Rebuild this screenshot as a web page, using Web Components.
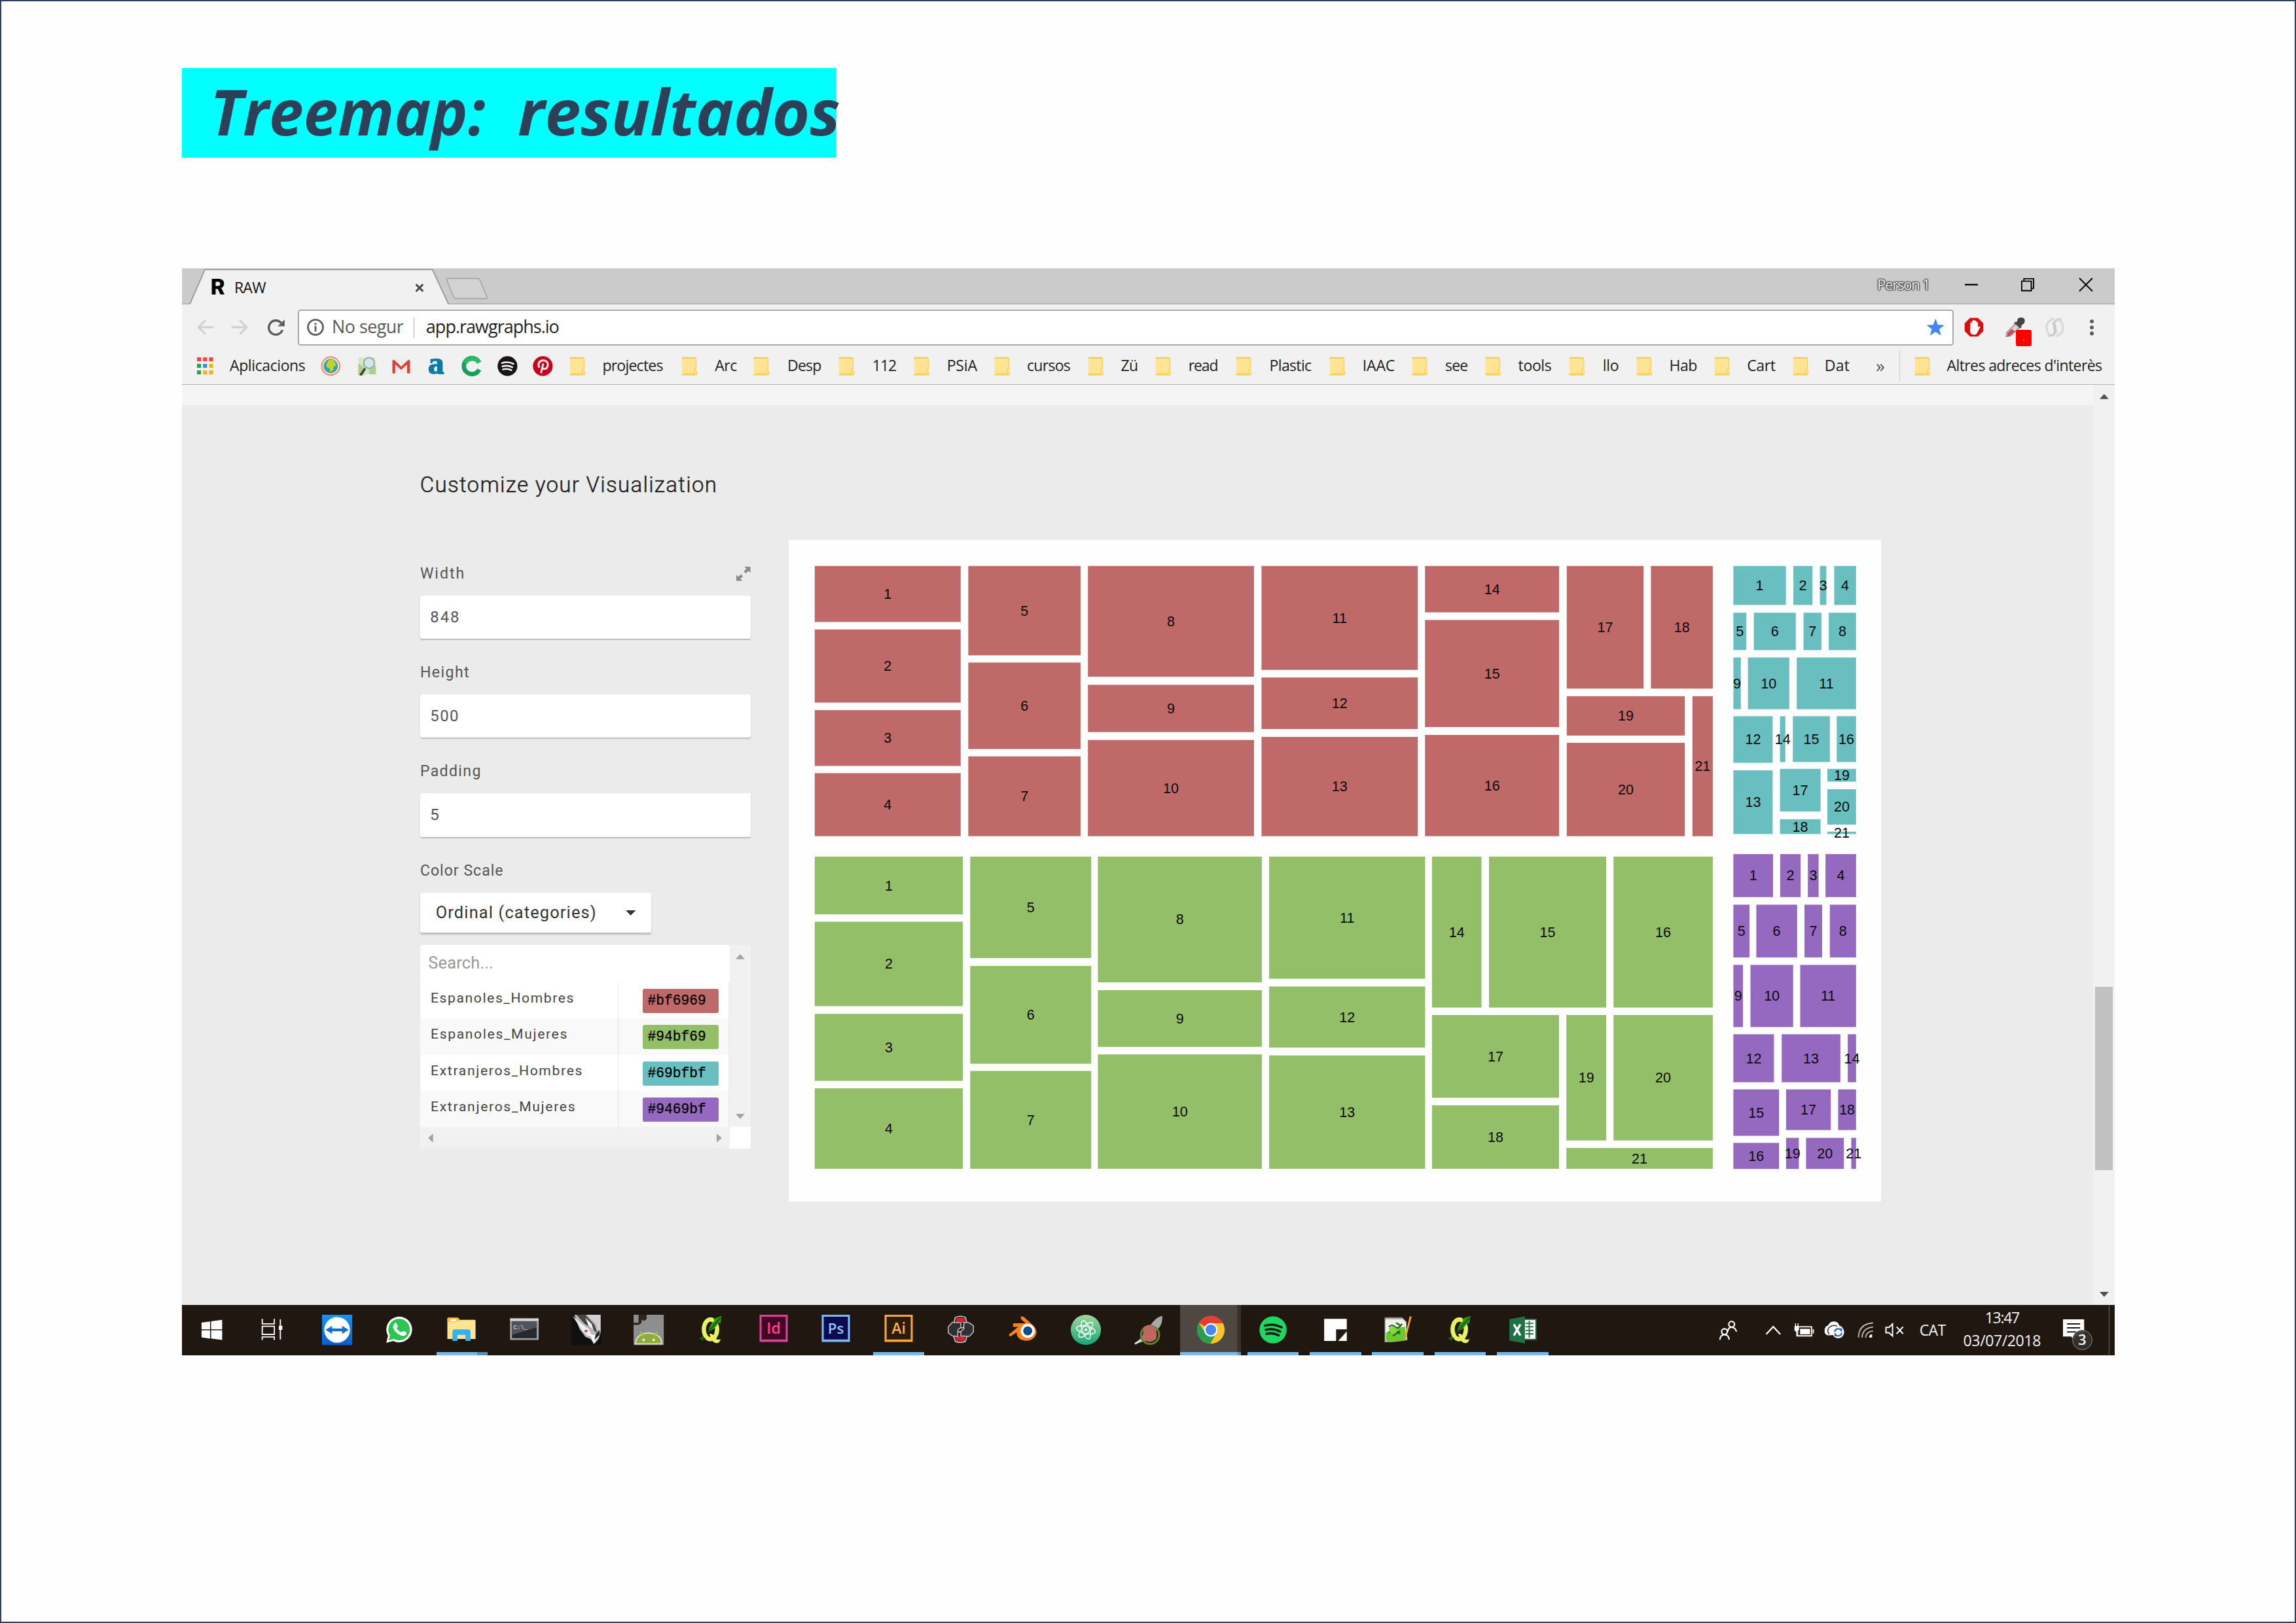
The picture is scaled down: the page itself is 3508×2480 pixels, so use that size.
<!DOCTYPE html>
<html lang="es">
<head>
<meta charset="utf-8">
<title>Treemap: resultados</title>
<style>
/* one rem is one pixel of the captured 1920x1080 desktop */
html{font-size:1.538px}
body{margin:0;background:#fefefe;width:3508px;height:2480px;overflow:hidden}
</style>
</head>
<body>
<slide-page></slide-page>
<script>
const SEG = '"Open Sans","Noto Sans",sans-serif';
const define = (name, css, html, after) => customElements.define(name, class extends HTMLElement {
  constructor() {
    super();
    this.attachShadow({ mode: 'open' });
  }
  connectedCallback() {
    const body = typeof html === 'function' ? html(this) : html;
    this.shadowRoot.innerHTML = `<style>*{box-sizing:border-box}:host{display:block;box-sizing:border-box}svg{display:block;overflow:visible}${css}</style>${body}`;
    if (after) after(this);
  }
});

/* a single line of text, spaced (or stretched) to a given width in px */
define('fit-text', ':host{flex:none}span{display:inline-block;white-space:pre;transform-origin:0 50%}', '<span><slot></slot></span>', el => {
  const s = el.shadowRoot.querySelector('span');
  const w = parseFloat(el.getAttribute('w')) * 1.538;
  el.style.width = w + 'px';
  const nat = s.getBoundingClientRect().width;
  const n = el.textContent.length;
  if (el.hasAttribute('stretch') || n < 2) s.style.transform = `scaleX(${w / nat})`;
  else s.style.letterSpacing = (w - nat) / n + 'px';
});

/* ---------- icons ---------- */
const I = {
  circle: ['0 0 20 20', `<circle cx="10" cy="10" r="9.6" fill="#f2845c"/><circle cx="10" cy="10" r="8.3" fill="#fbe9dc"/><circle cx="10" cy="10" r="7" fill="#27a6b5"/><path d="M8 4q4-1.500 6 1.500l1.500 4-2.500 1-.8 4-2.500 1.500-1-3.500-2.700-1.500-.5-3z" fill="#c5d22c"/>`],
  map: ['0 0 20 20', `<path d="M1 1h17v17H1z" fill="#d5e6c5"/><path d="M1 7l6 4v8H1zM12 12l7-3v9h-7z" fill="#a9d08f"/><path d="M8 12l-5 7" stroke="#3d3d30" stroke-width="2.2"/><circle cx="12" cy="6.5" r="5.5" fill="#cfe6ea" stroke="#93a9a3" stroke-width="1.4"/>`],
  gmail: ['0 0 20 20', `<path d="M1 3h18v14H1z" fill="#ececec"/><path d="M1 17V4l1.5-1L10 10l7.5-7L19 4v13h-3V8l-6 5.5L4 8v9z" fill="#dc4437"/>`],
  cee: ['0 0 20 20', `<path d="M17 6.5A8 8 0 1 0 17 13.500" fill="none" stroke="#14a05b" stroke-width="4.4"/><path d="M17 6.500A8 8 0 0 0 3 7" fill="none" stroke="#2abb67" stroke-width="4.400"/>`],
  spot: ['0 0 20 20', `<circle cx="10" cy="10" r="9.800" fill="#191414"/><path d="M4.500 7q6-2 11.500.8M5 10.300q5.200-1.500 9.800.8M5.500 13.300q4.500-1.200 8.300.7" fill="none" stroke="#f1f1f1" stroke-width="1.700" stroke-linecap="round"/>`],
  pin: ['0 0 20 20', `<circle cx="10" cy="10" r="9.800" fill="#c8021d"/><path d="M6.600 11.500C4.500 8 6.500 4.400 10.300 4.400c3.500 0 5.300 2.400 4.500 5.400-.7 3-3.800 4-5.100 2.100M10.400 7.500L8.200 17" fill="none" stroke="#f6e9ea" stroke-width="1.900"/>`],
  folder: ['0 0 16 20', `<path d="M0 1.500q0-1 1-1h13q1 0 1 1V12q1 1 1 3v4q0 .7-1 .7H1q-1 0-1-1z" fill="#ffe493"/><path d="M0 1.500q0-1 1-1h13q1 0 1 1v.6H0z" fill="#eccb6c"/><path d="M15 2v10M15 12.500q-2 .5-2 3v2.500H1.500L.5 19h14q1.200 0 1.200-1.500v-2" fill="none" stroke="#f5d160" stroke-width="1"/>`],
  apps: ['0 0 16 17', [0, 6.5, 13].map((y, j) => [0, 6, 12].map((x, i) => `<rect x="${x}" y="${y}" width="4" height="4" fill="${j == 0 ? '#fb4337' : i == 0 ? '#2da150' : i == 1 && j == 1 ? '#3a8af5' : '#fbb30b'}"/>`).join('')).join('')],
  windows: ['0 0 30 30', `<path d="M4.500 7.800l8.500-1.200v7.900H4.500zM14 6.500L25 5v9.500H14zM4.500 15.500H13v8.200l-8.500-1.300zM14 15.500h11V25l-11-1.400z" fill="#fff"/>`],
  task: ['0 0 30 30', `<path d="M5 4v5h12V4M5 11.500h12v8H5zM5 25v-3h12v3M23 4.500v20" fill="none" stroke="#fff" stroke-width="1.200"/><rect x="21.500" y="11" width="3.500" height="4" fill="#fff"/>`],
  tv: ['0 0 30 30', `<defs><linearGradient id="g" x2="0" y2="1"><stop stop-color="#1296f0"/><stop offset="1" stop-color="#0a5fca"/></linearGradient></defs><path d="M0 0h30v30H0z" fill="url(#g)"/><circle cx="15" cy="15" r="12.800" fill="#fff"/><path d="M3.500 15l6.500-4v2.600h10V11l6.500 4-6.500 4v-2.600H10V19z" fill="#0d6fd2"/>`],
  whats: ['0 0 30 30', `<path d="M2 28l1.800-7A12.800 12.800 0 1 1 9 26z" fill="#fff"/><path d="M4.500 25.500l1.300-5A10.700 10.700 0 1 1 9.500 24z" fill="#2bc64e"/><path d="M10 9q1.500-2 2.500 0l1 2.300q0 1-1.200 2 2 3.200 5 4.300l1.700-1.600 3 1.600q.8.500-.2 2-2 2-5 1Q10.500 18 8.800 12.500 8.800 10.500 10 9z" fill="#fff"/>`],
  explorer: ['0 0 30 30', `<path d="M1 4q0-1 1-1h9q1 0 1.500 1l.5 1h15q1 0 1 1v18H1z" fill="#ffe591"/><path d="M1 4q0-1 1-1h9q1 0 1.500 1l.6 1.500L10 7H1z" fill="#fdbd2b"/><rect x="4" y="4.500" width="6" height="2" fill="#fff"/><path d="M6 26V17q0-2.500 2.500-2.500h13q2.500 0 2.500 2.500v9h-5v-6h-8v6z" fill="#38b0ea"/>`],
  cmd: ['0 0 30 30', `<rect x=".8" y="4" width="28.500" height="21" rx="1" fill="#9b9ea3"/><rect x=".8" y="3.500" width="28.500" height="2.500" fill="#d4d6d9"/><rect x="2.800" y="6.500" width="24.500" height="16.800" fill="#25282c"/><path d="M2.800 6.500h24.500v6L2.800 20z" fill="#50535a"/><text x="4" y="14" font-size="6" font-family="Liberation Mono,monospace" fill="#e5e5e5">C:\\_</text>`],
  rhino: ['0 0 30 30', `<path d="M0 0h30v30H0z" fill="#101010"/><path d="M3 0h26v18l-2 6-4 5-4-5-5-2-6-8z" fill="#b9b9b9"/><path d="M1 1l9 8 7 5 4 8-5-1-5-5z" fill="#efefef"/><path d="M15 0l10 9 2 9 2-2V0z" fill="#d2d2d2"/><path d="M5 0h9l9 10 3 9-5-5-8-5z" fill="#454545"/><path d="M14 3l6 6 2 6-5-4z" fill="#f5f5f5"/><path d="M19 20l3 9 3-5 3-3-3-1z" fill="#fff"/><path d="M28 15l-4 5-1 5 5-5z" fill="#222"/><circle cx="14.500" cy="16.200" r="1.400" fill="#e13535"/>`],
  android: ['0 0 30 30', `<path d="M0 0h30v30H0z" fill="#8e8e90"/><path d="M5 0h8v4l-2 2-3-1v3l-3 2H0V8h5z" fill="#2d241c"/><path d="M2 29q0-10 13-11 13 1 13 11z" fill="#8eae3b" stroke="#e9efd9" stroke-width="1"/><path d="M7 17l2 4M23 17l-2 4" stroke="#9fc04c" stroke-width="1.800"/><circle cx="10" cy="25" r="1.200" fill="#fff"/><circle cx="20" cy="25" r="1.200" fill="#fff"/>`],
  qgis: ['0 0 30 30', `<ellipse cx="14" cy="14.500" rx="6.600" ry="9.800" fill="none" stroke="#e6f25e" stroke-width="4.200"/><path d="M13 19q3-1 5 3t6 2q-1 5-5 4t-6-9z" fill="#e6f25e"/><path d="M12 17q1-8 6-11l-1-2 8-3-1 8-2-1q-3 6-10 9z" fill="#2c9411"/><path d="M11.500 17.500L24 3" stroke="#0c5a06" stroke-width="1.200"/><path d="M3 23.500h6M6 21v5" stroke="#166d12" stroke-width="1.200"/>`],
  id: ['0 0 30 30', `<path d="M1 0h28v27H1z" fill="#e0409b"/><path d="M3 2h24v22.500H3z" fill="#420822"/><text x="15" y="19" font-size="15" text-anchor="middle" font-weight="600" font-family="Open Sans,sans-serif" fill="#ff3fa2">Id</text>`],
  ps: ['0 0 30 30', `<path d="M1 0h28v27H1z" fill="#7db9f5"/><path d="M3 2h24v22.500H3z" fill="#0c0a4f"/><text x="15" y="19" font-size="14.500" text-anchor="middle" font-weight="600" font-family="Open Sans,sans-serif" fill="#8ec7fb">Ps</text>`],
  ai: ['0 0 30 30', `<path d="M1 0h28v27H1z" fill="#fba634"/><path d="M3 2h24v22.500H3z" fill="#2c1a0a"/><text x="15" y="19" font-size="15" text-anchor="middle" font-weight="600" font-family="Open Sans,sans-serif" fill="#fdb14c">Ai</text>`],
  knot: ['0 0 30 30', `<path d="M9.500 2.500q5-2 10 0l1.500 5.500-4 5h-5l-4-5zM9.500 26.500q5 2 10 0L21 22l-4-5h-5l-4 5z" fill="#222" stroke="#d5d5d5" stroke-width="1"/><path d="M10 3.500q5-1.500 9 0v4.300h-9zM10 21.500h9v4q-4 1.500-9 0z" fill="#d9202c"/><path d="M2.500 12l4-4.500 8.500.500v4.500L12 15v6.500l-5.500-.5-4-3z" fill="#303030" stroke="#bdbdbd" stroke-width="1"/><path d="M27.500 17l-4 4.500-8.500-.500v-4.500L18 14V7.500l5.500.5 4 3z" fill="#303030" stroke="#bdbdbd" stroke-width="1"/>`],
  blender: ['0 0 30 30', `<path d="M12 2q2-1 4 1l9 8q5 6 1 11t-11 3.500-7-8l-6 4q-2 0-1.500-2l9-7.500H5q-1.500-1.500 0-3.500h12l-4.500-4z" fill="#f78320"/><circle cx="19" cy="16" r="7" fill="#fff"/><circle cx="19" cy="16" r="4.500" fill="#0f4c8e"/>`],
  atom: ['0 0 30 30', `<defs><linearGradient id="g" x2="0" y2="1"><stop stop-color="#9ed89a"/><stop offset="1" stop-color="#15a878"/></linearGradient></defs><circle cx="15" cy="15" r="15" fill="url(#g)"/><g fill="none" stroke="#fff" stroke-width="1"><ellipse cx="15" cy="15" rx="3.700" ry="9.500" transform="rotate(-18 15 15)"/><ellipse cx="15" cy="15" rx="3.700" ry="9.500" transform="rotate(42 15 15)"/><ellipse cx="15" cy="15" rx="3.700" ry="9.500" transform="rotate(102 15 15)"/></g><circle cx="15" cy="15" r="1.300" fill="#fff"/>`],
  feather: ['0 0 30 30', `<path d="M29 1q1 9-5 14L12 26l-9 3 4-5 10-13q5-8 12-10z" fill="#a9aaa6"/><circle cx="17" cy="20" r="9" fill="none" stroke="#60862a" stroke-width="2"/><path d="M11 12q6-4 10 0 4 6 2 12-3 3-7 3-6-1-6.500-5z" fill="#bf6663"/><path d="M2 29l6-4" stroke="#ddd" stroke-width="2"/>`],
  chrome: ['0 0 30 30', `<circle cx="15" cy="15" r="13.700" fill="#fbc42f"/><path d="M15 15L3.100 8.200A13.700 13.700 0 0 1 27 8.500H15z" fill="#e33e32"/><path d="M3.100 8.200A13.700 13.700 0 0 0 14.500 28.700L20.500 18 15 15 9.500 18z" fill="#27a050"/><circle cx="15" cy="15" r="6.800" fill="#fff"/><circle cx="15" cy="15" r="5.300" fill="#4687f3"/>`],
  spotify: ['0 0 30 30', `<circle cx="15" cy="15" r="13.500" fill="#1ed760"/><path d="M7 10.800q8.500-2.500 16.500 1.700M7.800 15q7.500-2 14.200 1.700M8.500 19q6.500-1.600 12 1.500" fill="none" stroke="#191c18" stroke-width="2.300" stroke-linecap="round"/>`],
  sticky: ['0 0 30 30', `<path d="M4 4h22.500v10.500H16V26H4z" fill="#fff"/><path d="M26.500 15v2L18 26h-2V15z" fill="#231a12"/><path d="M26.500 16.500V26H18z" fill="#fff"/>`],
  npp: ['0 0 30 30', `<path d="M2 3h17l4 4 1 18q-12 2-22 2z" fill="#f0f0ee" stroke="#999" stroke-width=".7"/><path d="M3 18q8-6 19-6l1 13q-10 2-20 1.500z" fill="#69c92e"/><path d="M6 12q3-3 6 0t7-3M6 18q5-4 11 1M10 21l7-5M13 8l5 3" fill="none" stroke="#2a5a1a" stroke-width="1.500"/><path d="M6 13q5-3 9 2l-3 4-5-1z" fill="#7edc3a"/><path d="M2.500 3.500h17" stroke="#777" stroke-width="2" stroke-dasharray="1 1"/><path d="M28.500 2l-5.500 21-1.200 2.500-.1-3.500L26.500 1.500z" fill="#f0a42f"/>`],
  excel: ['0 0 30 30', `<path d="M15 4.500h13.500v20H15z" fill="#fff" stroke="#1f7244" stroke-width="1.300"/><path d="M18 8.500h8M18 12h8M18 15.500h8M18 19h8M21.800 6v17" stroke="#1f7244" stroke-width="1.200"/><path d="M2 4.500L17.500 1.500v27L2 25.500z" fill="#1f7244"/><path d="M6.500 9.500l6.500 11M13 9.500l-6.500 11" stroke="#fff" stroke-width="2.200"/>`],
  people: ['0 0 20 20', `<g fill="none" stroke="#fff" stroke-width="1.500"><circle cx="13.500" cy="3.800" r="3"/><path d="M9.500 11.500q0-4.500 4-4.500t5 4.500"/><circle cx="6" cy="11.500" r="3"/><path d="M1.200 20q.3-5.300 4.800-5.300t5 5.300"/></g>`],
  chev: ['0 0 16 10', `<path d="M1 9l7-7.500L15 9" fill="none" stroke="#fff" stroke-width="1.500"/>`],
  battery: ['0 0 20 14', `<path d="M5 3.500h12.500v9H3.500V8M19.200 6v4" fill="none" stroke="#fff" stroke-width="1.200"/><path d="M6 5.500h10v5.500H6z" fill="#fff"/><path d="M1 3h3.500v3.500L3 8H2L.8 6.500zM1.500 0v3M4 0v3M2.700 8v5" fill="#fff" stroke="#fff" stroke-width=".9"/>`],
  cloud: ['0 0 20 17', `<path d="M4 14q-4-1-3.500-5Q.5 5 4 4q2-4 6-3.800 4.500.3 5 4Q19 5 19 9v4z" fill="#fff"/><path d="M5 13Q2 8 6 5.500 9 3 13 5" fill="none" stroke="#3d342c" stroke-width="1"/><circle cx="14" cy="11" r="5.900" fill="#fff"/><path d="M10.500 10.500a3.600 3.600 0 0 1 6.500-1.500V7M17.500 11.500a3.600 3.600 0 0 1-6.500 1.500v2" fill="none" stroke="#1668d6" stroke-width="1.400"/>`],
  wifi: ['0 0 16 16', `<g fill="none" stroke="#bbb" stroke-width="1.200"><path d="M1 15.500Q1 2 15.500 1"/><path d="M4.500 15.500Q5 6 15.500 5"/><path d="M8 15.500Q8.500 9.500 15.500 9"/></g><path d="M11.500 15.500q0-3 3-3.300v3.300z" fill="#fff"/>`],
  vol: ['0 0 19 14', `<path d="M1 4h3l3.500-3.300v12L4 9.500H1zM11.500 3.500l6.500 7M18 3.500l-6.500 7" fill="none" stroke="#fff" stroke-width="1.300"/>`],
  note: ['0 0 21 21', `<path d="M0 0h21v17h-9v4l-4-4H0z" fill="#fff"/><path d="M4 4.500h13M4 8.500h13M4 12.500h9" stroke="#20170f" stroke-width="1.300"/>`],
  back: ['0 0 17 17', `<path d="M16.500 8.500H2M8.500 1.500l-7 7 7 7" fill="none" stroke="#cfcfcf" stroke-width="1.900"/>`],
  fwd: ['0 0 17 17', `<path d="M.5 8.500H15M8.500 1.500l7 7-7 7" fill="none" stroke="#cfcfcf" stroke-width="1.900"/>`],
  reload: ['0 0 18 18', `<path d="M15.300 11.200A7 7 0 1 1 14 4.200" fill="none" stroke="#5a5a5a" stroke-width="2.200"/><path d="M17.500.8V7.500H10.600z" fill="#5a5a5a"/>`],
  info: ['0 0 17 17', `<circle cx="8.500" cy="8.500" r="7.500" fill="none" stroke="#5a5a5a" stroke-width="1.700"/><path d="M8.500 7.300v5.400M8.500 4.200v1.900" stroke="#5a5a5a" stroke-width="1.800"/>`],
  star: ['0 0 20 19', `<path d="M10 0l2.500 6.700 7.200.3-5.700 4.400 2 7L10 14.300 4 18.400l2-7L.3 7l7.200-.3z" fill="#4285f4"/>`],
  adb: ['0 0 20 20', `<path d="M6 .5h8l5.500 5.500v8L14 19.500H6L.5 14V6z" fill="#d90f0f"/><path d="M6.300 9V5.500h1.500V3.400h1.600V2.600H11v1h1.600V5h1.500v5l1.500-1q1 .3.500 1.200l-3 6q-1 1.500-3 1.500-4 0-4-4z" fill="#fff"/>`],
  drop: ['0 0 20 20', `<path d="M13 1q4-2 6 0t0 5l-3 2.500 1 1-2 1.500-6-5 2-2 1 .7z" fill="#444"/><path d="M10.500 6.500l4 3.500-9 8.500-4 .5.500-4z" fill="#d8d8d8" stroke="#777" stroke-width=".8"/><path d="M7 11.500l3 2.500-5 4-2.500.5.500-3z" fill="#d9434a"/>`],
  swirl: ['0 0 20 20', `<g fill="none" stroke-linecap="round"><path d="M16 2q-7-1-6.500 7Q9.500 13 11.500 14" stroke="#d2d2d2" stroke-width="2.400"/><path d="M4 18q7 1 6.500-7Q10.500 7 8.500 6" stroke="#c6c6c6" stroke-width="2"/><path d="M8.500 1.500Q1 4 2 11q.5 4 3 6M11.500 18.500Q19 16 18 9q-.5-4-3-6" stroke="#dadada" stroke-width="2.200"/></g>`],
  dots: ['0 0 4 16', `<g fill="#5a5a5a"><circle cx="2" cy="2" r="1.900"/><circle cx="2" cy="8" r="1.900"/><circle cx="2" cy="14" r="1.900"/></g>`],
  expand: ['0 0 14 14', `<path d="M8 0h6v6l-2-2-2.600 2.600-2-2L10 2zM0 8l2 2 2.600-2.600 2 2L4 12l2 2H0z" fill="#8a8a8a"/>`],
  min: ['0 0 13 13', `<path d="M0 6.500h13" stroke="#000" stroke-width="1.500"/>`],
  restore: ['0 0 13 13', `<path d="M.6 3h9.500v9.500H.6zM2.800 3V.6h9.600v9.600H10" fill="none" stroke="#000" stroke-width="1.200"/>`],
  close: ['0 0 13 13', `<path d="M0 0l13 13M13 0L0 13" stroke="#000" stroke-width="1.200"/>`],
  tabx: ['0 0 9 9', `<path d="M1 1l7 7M8 1L1 8" stroke="#444" stroke-width="1.900"/>`]
};
define('app-icon', ':host{flex:none}svg{width:100%;height:100%}', el => {
  const [vb, body] = I[el.getAttribute('name')];
  el.style.width = el.getAttribute('w') + 'rem';
  el.style.height = (el.getAttribute('h') || el.getAttribute('w')) + 'rem';
  return `<svg viewBox="${vb}">${body}</svg>`;
});
const ic = (name, w, h, style = '') => `<app-icon name="${name}" w="${w}" h="${h || w}" style="${style}"></app-icon>`;
const ft = (text, w, style = '') => `<fit-text w="${w}" style="${style}">${text}</fit-text>`;
const gap = w => `<i style="flex:none;width:${w}rem"></i>`;

/* ---------- browser chrome ---------- */
define('tab-strip', `:host{height:36rem;background:#cbcbcb;font:15rem/20rem ${SEG};color:#111}
.r{display:flex;height:36rem;border-bottom:1rem solid #999}
.tab{position:relative;width:257rem;height:36rem;margin-left:7.500rem}
.tab>svg{position:absolute;inset:0;width:257rem;height:36rem}
.in{position:relative;display:flex;align-items:center;height:34rem;padding:4.500rem 0 0 21rem}
b{width:13rem;font:900 22rem/20rem Roboto,sans-serif;color:#000}
.nt{width:42rem;height:22rem;margin:9rem 0 0 -2.500rem}
.ctl{display:flex;margin-left:auto;padding-top:10rem;height:34rem}
.p{color:#fafafa;text-shadow:0 0 1px #222,0 0 1px #222,0 0 1.500px #222,0 0 2px #333,0 0 2px #333,0 0 3px #444;margin-top:-3.500rem}`,
`<div class="r"><div class="tab"><svg viewBox="0 0 257 36"><path d="M0 35.500L15 1.500H241L257 35.500V37H0z" fill="#f1f1f1"/><path d="M0 35.500L15 1.200H241L257 35.500" fill="none" stroke="#999" stroke-width="1.200"/></svg>
<div class="in"><b>R</b>${gap(10.5)}${ft('RAW', 31)}${gap(148.5)}${ic('tabx', 9)}</div></div>
<svg class="nt" viewBox="0 0 42 22"><path d="M1.500 1H32q1.500 0 2 1.500l7 17q.5 1.500-1 1.500H10q-1.500 0-2-1.500l-7-17Q.5 1 1.500 1z" fill="#d3d3d3" stroke="#aaa" stroke-width="1.200"/></svg>
<div class="ctl">${ft('Person 1', 52, 'font-size:14.5rem').replace('<fit-text', '<fit-text class="p"')}${gap(35)}${ic('min', 13)}${gap(43)}${ic('restore', 13)}${gap(45)}${ic('close', 13)}${gap(22)}</div></div>`);

define('tool-bar', `:host{height:44rem;background:#f1f1f1;display:flex;align-items:center;padding:1.500rem 0 0 15rem;font:17.500rem/34rem ${SEG}}
.box{display:flex;align-items:center;height:35.500rem;width:1645rem;margin:0 0 0 12.700rem;background:#fff;border:1.500rem solid #a9a9a9;border-radius:3rem;padding-left:8rem}
.d{width:1rem;height:20rem;background:#aaa;margin:0 11.500rem 0 10rem}
.dr{position:relative;width:20rem;height:20rem}
.bd{position:absolute;left:11.500rem;top:12.500rem;width:15rem;height:16rem;border-radius:2rem;background:#f00;color:#fcc;font:9rem/14rem ${SEG};text-align:center}`,
`${ic('back', 17)}${gap(17)}${ic('fwd', 17)}${gap(18.5)}${ic('reload', 18)}
<div class="box">${ic('info', 17)}${gap(7.5)}${ft('No segur', 71, 'color:#5a5a5a;margin-top:-1.5rem')}<div class="d"></div>${ft('app.rawgraphs.io', 132, 'color:#222;margin-top:-1.5rem')}${gap(1358.5)}${ic('star', 18.5)}</div>
${gap(10)}${ic('adb', 19.5)}${gap(21)}<div class="dr">${ic('drop', 20)}<span class="bd">.</span></div>${gap(19.5)}${ic('swirl', 20)}${gap(25.5)}${ic('dots', 4, 16)}`);

/* [left edge of the folder, left edge of the label, label width, label] */
const marks = [[385,417.8,60,'projectes'],[496,529.5,22,'Arc'],[568,601.6,33.5,'Desp'],[652,686,23.5,'112'],[727,760,30,'PSiA'],[806.7,839.5,43,'cursos'],[900,932.8,17,'Zü'],[966.8,1000,29,'read'],[1046.8,1080.5,41.5,'Plastic'],[1139.7,1173,32,'IAAC'],[1221.8,1255,22.5,'see'],[1295,1327.6,33,'tools'],[1378,1411.5,16,'llo'],[1444.9,1477.8,27.5,'Hab'],[1522,1555,28,'Cart'],[1600,1632,25,'Dat']];
define('bookmark-bar', `:host{height:36rem;background:#f1f1f1;border-bottom:1rem solid #b4b4b4;font:15rem/20rem ${SEG};color:#222}
.r{display:flex;align-items:center;height:34.500rem}
fit-text{margin-top:-2rem}
.a{display:flex;justify-content:center;width:20rem;font:bold 32rem/20rem "Liberation Serif",serif;color:#0b7ba8;-webkit-text-stroke:1rem #0b7ba8;margin-top:-5rem}
.m{display:flex;align-items:center}`,
`<div class="r">${gap(15)}${ic('apps', 16, 17)}${gap(16.5)}${ft('Aplicacions', 75)}${gap(15.5)}${ic('circle', 20)}${gap(16)}${ic('map', 19.5)}${gap(14.5)}${ic('gmail', 19.5)}${gap(15)}<span class="a">a</span>${gap(16)}${ic('cee', 20)}${gap(15)}${ic('spot', 20)}${gap(15)}${ic('pin', 20)}${gap(16.5)}
${marks.map((m, i) => `<div class="m" style="width:${((marks[i + 1] || [1683])[0] - m[0]).toFixed(1)}rem">${ic('folder', 16, 19)}${gap((m[1] - m[0] - 16).toFixed(1))}${ft(m[3], m[2])}</div>`).join('')}
${ft('»', 9, 'font-size:18rem;color:#555')}${gap(14)}<i style="width:1rem;height:31rem;background:#ccc"></i>${gap(14)}${ic('folder', 16, 19)}${gap(16.5)}${ft("Altres adreces d'interès", 154)}</div>`);

/* ---------- RAW page ---------- */
define('form-field', `:host{margin-bottom:24rem}
.l{display:flex;justify-content:space-between;align-items:center;height:20rem;margin-bottom:11.400rem;font:15rem/21rem Roboto,sans-serif;color:#555}
.i{height:43rem;background:#fff;border-radius:2rem;box-shadow:0 1rem 1rem #bbb;font:15.500rem/43rem Roboto,sans-serif;color:#555;padding-left:10rem}`,
el => `<div class="l">${ft(el.getAttribute('label'), el.getAttribute('lw'))}${el.hasAttribute('expand') ? ic('expand', 14) : ''}</div><div class="i">${ft(el.getAttribute('value'), el.getAttribute('vw'))}</div>`);

const rows = [['Espanoles_Hombres', 143, '#bf6969'], ['Espanoles_Mujeres', 136.5, '#94bf69'], ['Extranjeros_Hombres', 151.5, '#69bfbf'], ['Extranjeros_Mujeres', 144.5, '#9469bf']];
define('color-list', `:host{display:grid;grid-template-columns:307.400rem 21rem;grid-template-rows:180.800rem 21rem;width:328.400rem}
.s{height:36.800rem;background:#fff;border-radius:2rem;font:16.500rem/36rem Roboto,sans-serif;color:#999;padding-left:8rem}
.row{display:flex;height:36rem;width:306.200rem;background:#fff;font:13.700rem/20rem Roboto,sans-serif;color:#444}
.row:nth-child(odd){background:#f9f9f9}
.n{width:197rem;padding:5.800rem 0 0 10.500rem;border-right:1rem solid #e4e4e4}
.c{width:75.500rem;height:24rem;margin:6.500rem 0 0 24rem;border-radius:2rem;padding-left:5rem;font:13.800rem/23.500rem "Liberation Mono",monospace;color:#000;-webkit-text-stroke:.2rem #000}
.v{display:flex;flex-direction:column;justify-content:space-between;align-items:center;background:#f1f1f1;padding:9rem 0 8.500rem}
.h{display:flex;justify-content:space-between;align-items:center;background:#f1f1f1;padding:0 8rem}
.k{background:#fff}`,
`<div><div class="s">${ft('Search...', 65)}</div>${rows.map(r => `<div class="row"><div class="n">${ft(r[0], r[1])}</div><div class="c" style="background:${r[2]}">${ft(r[2], 58)}</div></div>`).join('')}</div>
<div class="v"><svg style="width:9rem;height:5rem" viewBox="0 0 9 5"><path d="M0 5L4.500 0 9 5z" fill="#a3a3a3"/></svg><svg style="width:9rem;height:5rem" viewBox="0 0 9 5"><path d="M0 0l4.500 5L9 0z" fill="#a3a3a3"/></svg></div>
<div class="h"><svg style="width:5rem;height:9rem" viewBox="0 0 5 9"><path d="M5 0L0 4.500 5 9z" fill="#a3a3a3"/></svg><svg style="width:5rem;height:9rem" viewBox="0 0 5 9"><path d="M0 0l5 4.500L0 9z" fill="#a3a3a3"/></svg></div><div class="k"></div>`);

/* treemap leaves: x1, x2, y1, y2 in order of their labels */
const B = 1277.3, T = 864.4, GT = 1308.5, GB = 1785.6, L = 2648.2, R = 2835.6;
const groups = {
  '#bf6969': [[1244.6,1467.6,T,950],[1244.6,1467.6,961.4,1073.2],[1244.6,1467.6,1084.7,1170],[1244.6,1467.6,1181,B],[1479.2,1650.7,T,1001],[1479.2,1650.7,1012,1144.2],[1479.2,1650.7,1155.3,B],[1662,1915.7,T,1033.7],[1662,1915.7,1046,1118.3],[1662,1915.7,1130.3,B],[1927.2,2166,T,1023.2],[1927.2,2166,1034.8,1113.6],[1927.2,2166,1125.6,B],[2177,2382,T,935.3],[2177,2382,947,1110.6],[2177,2382,1122.6,B],[2393.6,2511,T,1051.8],[2522.2,2616.7,T,1051.8],[2393.6,2574,1063.4,1123.5],[2393.6,2574,1134.7,B],[2585.6,2616.7,1063.4,B]],
  '#94bf69': [[1244.6,1471,GT,1396.8],[1244.6,1471,1408,1537],[1244.6,1471,1548.9,1651.2],[1244.6,1471,1662.6,GB],[1482.2,1667,GT,1463.6],[1482.2,1667,1475.6,1625],[1482.2,1667,1636,GB],[1677.2,1927.8,GT,1500.6],[1677.2,1927.8,1512.6,1599.3],[1677.2,1927.8,1610.8,GB],[1938.9,2177.2,GT,1495.2],[1938.9,2177.2,1507,1600.3],[1938.9,2177.2,1612.3,GB],[2187.7,2263.3,GT,1539.2],[2274.8,2453.9,GT,1539.2],[2465,2616.7,GT,1539.2],[2187.7,2381.8,1550.6,1677],[2187.7,2381.8,1688.6,GB],[2393,2453.9,1550.6,1742.3],[2465,2616.7,1550.6,1742.3],[2393,2616.7,1753.7,GB]],
  '#69bfbf': [[L,2728.4,T,924],[2739.8,2769,T,924],[2780.4,2790.2,T,924],[2802.2,R,T,924],[L,2668,935.8,993],[2679.4,2743.6,935.8,993],[2755.4,2782.7,935.8,993],[2793.9,R,935.8,993],[L,2659.6,1004.2,1083.3],[2670.4,2733.6,1004.2,1083.3],[2745,R,1004.2,1083.3],[L,2708.2,1094,1165.2],[L,2708.2,1176.7,1274],[2719.3,2727.6,1094,1164],[2739,2795.6,1094,1164],[2806.1,R,1094,1164],[2719.3,2781.4,1174.4,1239.6],[2719.3,2781.4,1251.4,1274],[2791.8,R,1174.4,1194],[2791.8,R,1205.6,1259.6],[2791.8,R,1270.4,1274]],
  '#9469bf': [[L,2708.8,1304.7,1370.4],[2719.7,2750.9,1304.7,1370.4],[2762,2778.4,1304.7,1370.4],[2789,R,1304.7,1370.4],[L,2672.8,1382,1462.6],[2683.2,2745.6,1382,1462.6],[2756.8,2783.8,1382,1462.6],[2795.6,R,1382,1462.6],[L,2662.8,1474,1569],[2674.3,2739.5,1474,1569],[2750.3,R,1474,1569],[L,2710.2,1580,1653.3],[2722,2811.7,1580,1653.3],[2822.9,R,1580,1653.3],[L,2718,1664.2,1735.2],[L,2718,1746,1785.8],[2728.7,2797,1664.2,1726.3],[2808.2,R,1664.2,1726.3],[2728.7,2748.2,1738.3,1785.8],[2759.2,2817,1738.3,1785.8],[2828.3,R,1738.3,1785.8]]
};
define('tree-map', ':host{width:1669px;height:1011px;background:#fefefe;flex:none}svg{width:1669px;height:1011px}text{font:21.500px "Liberation Sans",Arial,sans-serif;text-anchor:middle;fill:#0a0a0a}',
() => `<svg viewBox="1204.800 824.600 1669 1011">${Object.entries(groups).map(([c, list]) => `<g>${list.map(([x, X, y, Y]) => `<rect x="${x}" y="${y}" width="${(X - x).toFixed(1)}" height="${(Y - y).toFixed(1)}" fill="${c}"/>`).join('')}${list.map(([x, X, y, Y], i) => `<text x="${(x + X) / 2}" y="${(y + Y) / 2 + 7.5}">${i + 1}</text>`).join('')}</g>`).join('')}</svg>`);

define('raw-page', `:host{display:flex;height:914rem;background:#ebebeb}
.pg{width:1898.600rem}
.top{height:19.600rem;background:#f5f5f5}
.hd{padding:64.600rem 0 0 236.500rem;font:300 21.500rem/30rem Roboto,sans-serif;color:#222;-webkit-text-stroke:.3rem #222}
.row{display:flex;margin:39.400rem 0 0 236.600rem;align-items:flex-start}
.l{width:328.400rem;margin-right:37.700rem;padding-top:24rem;flex:none}
.lb{height:20rem;font:15rem/21rem Roboto,sans-serif;color:#555}
.sel{display:flex;align-items:center;justify-content:space-between;width:229.500rem;height:40rem;margin:11.400rem 0 12.400rem;background:#fff;border-radius:2rem;box-shadow:0 1.500rem 1.500rem #bbb;font:16.500rem/40rem Roboto,sans-serif;color:#333;padding:0 15rem 0 15.500rem}
.sb{display:flex;flex-direction:column;align-items:center;flex:1;background:#f1f1f1;padding-top:9rem}
.th{width:17rem;height:182rem;background:#c1c1c1;margin:584rem 0 121rem}`,
`<div class="pg"><div class="top"></div><div class="hd">${ft('Customize your Visualization', 295.5)}</div>
<div class="row"><div class="l"><form-field label="Width" lw="45" value="848" vw="30" expand></form-field><form-field label="Height" lw="49.5" value="500" vw="29"></form-field><form-field label="Padding" lw="61" value="5" vw="9"></form-field>
<div class="lb">${ft('Color Scale', 83)}</div><div class="sel">${ft('Ordinal (categories)', 160)}<svg style="width:10rem;height:5rem" viewBox="0 0 10 5"><path d="M0 0h10L5 5z" fill="#333"/></svg></div><color-list></color-list></div>
<tree-map></tree-map></div></div>
<div class="sb"><svg style="width:9rem;height:5rem" viewBox="0 0 9 5"><path d="M0 5L4.500 0 9 5z" fill="#505050"/></svg><div class="th"></div><svg style="width:9rem;height:5rem" viewBox="0 0 9 5"><path d="M0 0l4.500 5L9 0z" fill="#505050"/></svg></div>`);

/* ---------- taskbar ---------- */
define('task-item', `:host{position:relative;width:62rem;height:50rem;display:flex;align-items:center;justify-content:center;flex:none}
u{position:absolute;bottom:0;left:5.500rem;width:51rem;height:3rem;background:#76b9ed}
:host([active]){background:linear-gradient(90deg,#201710 0.500rem,#4f4741 0.500rem,#4f4741 57.500rem,#3a332d 57.500rem,#3a332d 61rem,#201710 61rem)}
:host([active]) u{left:.5rem;width:60.500rem;background:linear-gradient(90deg,#76b9ed 57rem,#5b93bd 57rem)}
:host([multi]) u{left:6rem;background:linear-gradient(90deg,#76b9ed 40rem,#5b8fb5 40rem)}`,
el => `${ic(el.getAttribute('icon'), el.getAttribute('size') || 30)}${el.hasAttribute('open') ? '<u></u>' : ''}`);
const items = ['tv', 'whats', 'explorer|open multi', 'cmd', 'rhino', 'android', 'qgis', 'id', 'ps', 'ai|open', 'knot', 'blender', 'atom', 'feather', 'chrome|open active', 'spotify|open', 'sticky|open', 'npp|open', 'qgis|open', 'excel|open'];
define('task-bar', `:host{display:flex;align-items:center;height:50rem;background:#201710;color:#f4f4f4;font:15rem/20rem ${SEG}}
.tray{display:flex;align-items:center;margin-left:auto;height:50rem}
.clk{display:flex;flex-direction:column;align-items:center;width:77rem;padding-top:1rem}
.clk fit-text{height:23rem;line-height:20rem}
.nt{position:relative;width:21rem;height:21rem}
.bd{position:absolute;left:9rem;top:10rem;width:20.500rem;height:20.500rem;border-radius:50%;border:1rem solid #888;background:#333230ee;color:#fff;font:600 14rem/18rem ${SEG};text-align:center}`,
`${gap(15)}${ic('windows', 30)}${gap(30)}${ic('task', 30)}${gap(18)}${items.map(s => { const [n, f] = s.split('|'); return `<task-item icon="${n}" ${f || ''}></task-item>`; }).join('')}
<div class="tray">${ic('people', 19, 19)}${gap(27)}${ic('chev', 16, 10)}${gap(12.500)}${ic('battery', 20, 14)}${gap(10.5)}${ic('cloud', 20, 17)}${gap(13)}${ic('wifi', 16)}${gap(11.500)}${ic('vol', 19, 14)}${gap(15)}${ft('CAT', 26)}${gap(17.5)}
<div class="clk">${ft('13:47', 34)}${ft('03/07/2018', 77)}</div>${gap(22)}<div class="nt">${ic('note', 21)}<span class="bd">3</span></div>${gap(24.5)}<i style="width:1rem;height:50rem;background:#6b6560"></i>${gap(5)}</div>`);

define('desktop-shot', ':host{width:2953px;height:1661px;overflow:hidden}', '<tab-strip></tab-strip><tool-bar></tool-bar><bookmark-bar></bookmark-bar><raw-page></raw-page><task-bar></task-bar>');
define('slide-page', `:host{width:3508px;height:2480px;border:2px solid #2e4060;padding:102px 0 0 276px;background:#fefefe}
h1{display:flex;margin:0 0 169px;width:1000px;height:137px;background:#0ff;padding-left:43px;font:italic bold 97px/131px ${SEG};color:#2e4057}`,
`<h1><fit-text w="305.5" stretch>Treemap:  </fit-text><fit-text w="320.5" stretch>resultados</fit-text></h1><desktop-shot></desktop-shot>`);
</script>
</body>
</html>
